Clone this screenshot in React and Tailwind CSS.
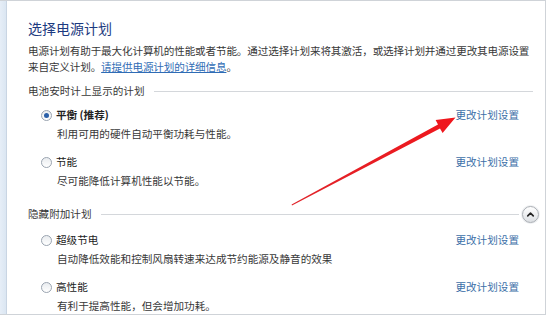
import { ChevronUp } from "lucide-react";

const plansShown = [
  { name: "平衡 (推荐)", desc: "利用可用的硬件自动平衡功耗与性能。", selected: true, bold: true },
  { name: "节能", desc: "尽可能降低计算机性能以节能。" },
];

const plansHidden = [
  { name: "超级节电", desc: "自动降低效能和控制风扇转速来达成节约能源及静音的效果" },
  { name: "高性能", desc: "有利于提高性能，但会增加功耗。" },
];

function Radio({ selected }) {
  return (
    <span className="flex h-[11px] w-[11px] shrink-0 items-center justify-center rounded-full border border-[#9aa4b0] bg-gradient-to-b from-[#e9ecef] to-[#ffffff]">
      {selected && <span className="h-[5px] w-[5px] rounded-full bg-[#2a5fa8]" />}
    </span>
  );
}

function PlanRow({ plan, className = "" }) {
  return (
    <div className={`flex justify-between pr-[20px] ${className}`}>
      <div>
        <div className="flex h-4 items-center pl-[13px]">
          <Radio selected={plan.selected} />
          <span className={`ml-[4px] text-[#222] ${plan.bold ? "font-bold" : ""}`}>{plan.name}</span>
        </div>
        <div className="mt-[3px] h-4 pl-[29px] leading-4 text-[#383838]">{plan.desc}</div>
      </div>
      <a className="h-4 leading-4 text-[#3d6fa8]">更改计划设置</a>
    </div>
  );
}

function SectionHeader({ children, collapse }) {
  return (
    <div className="flex h-4 items-center">
      <span className="leading-4 text-[#383838]">{children}</span>
      <div className="ml-[9px] h-px flex-1 bg-[#d4d7db]" />
      {collapse && (
        <span className="-my-2 ml-[3px] flex h-[17px] w-[17px] items-center justify-center rounded-full border border-[#a9adb3] bg-gradient-to-b from-[#ffffff] to-[#dcdfe3] shadow-[0_0_0_1px_#eef0f2]">
          <ChevronUp className="h-[11px] w-[11px] text-[#222]" strokeWidth={3.5} />
        </span>
      )}
    </div>
  );
}

export default function App() {
  return (
    <div
      className="relative h-[319px] w-[550px] overflow-hidden bg-white text-[10.6px]"
      style={{ fontFamily: '"Noto Sans CJK SC", "Noto Sans", sans-serif' }}
    >
      <div className="flex h-[315px] w-[546px] border-t border-b border-r border-[#cfd3d8]">
        <div className="w-[7px] shrink-0 border-r border-[#c9d5e3] bg-gradient-to-r from-[#e6eef7] to-[#dbe6f2]" />
        <div className="flex-1 pl-[21px] pr-[6px] pt-[18px]">
          <h1 className="h-[18px] text-[14px] leading-[18px] text-[#1c3a80]">选择电源计划</h1>
          <p className="mt-[6px] leading-4 text-[#383838] tracking-[-0.15px]">
            电源计划有助于最大化计算机的性能或者节能。通过选择计划来将其激活，或选择计划并通过更改其电源设置
            <br />
            来自定义计划。<a className="text-[#2f6cb5] underline">请提供电源计划的详细信息</a>。
          </p>
          <div className="mt-[8px] pr-[6px]">
            <SectionHeader>电池安时计上显示的计划</SectionHeader>
          </div>
          <PlanRow plan={plansShown[0]} className="mt-[8px]" />
          <PlanRow plan={plansShown[1]} className="mt-[12px]" />
          <div className="mt-[17px]">
            <SectionHeader collapse>隐藏附加计划</SectionHeader>
          </div>
          <PlanRow plan={plansHidden[0]} className="mt-[10px]" />
          <PlanRow plan={plansHidden[1]} className="mt-[12px]" />
        </div>
      </div>

      <svg className="pointer-events-none absolute left-0 top-0" width="550" height="319">
        <defs>
          <linearGradient id="arrowRed" x1="292" y1="205" x2="455" y2="118" gradientUnits="userSpaceOnUse">
            <stop offset="0" stopColor="#e0242a" />
            <stop offset="1" stopColor="#f0161c" />
          </linearGradient>
        </defs>
        <polygon
          points="292,205.6 440,128.4 442.6,133 455.5,117.6 435.6,120 438,124.6 291.6,204.6"
          fill="url(#arrowRed)"
        />
      </svg>
    </div>
  );
}
